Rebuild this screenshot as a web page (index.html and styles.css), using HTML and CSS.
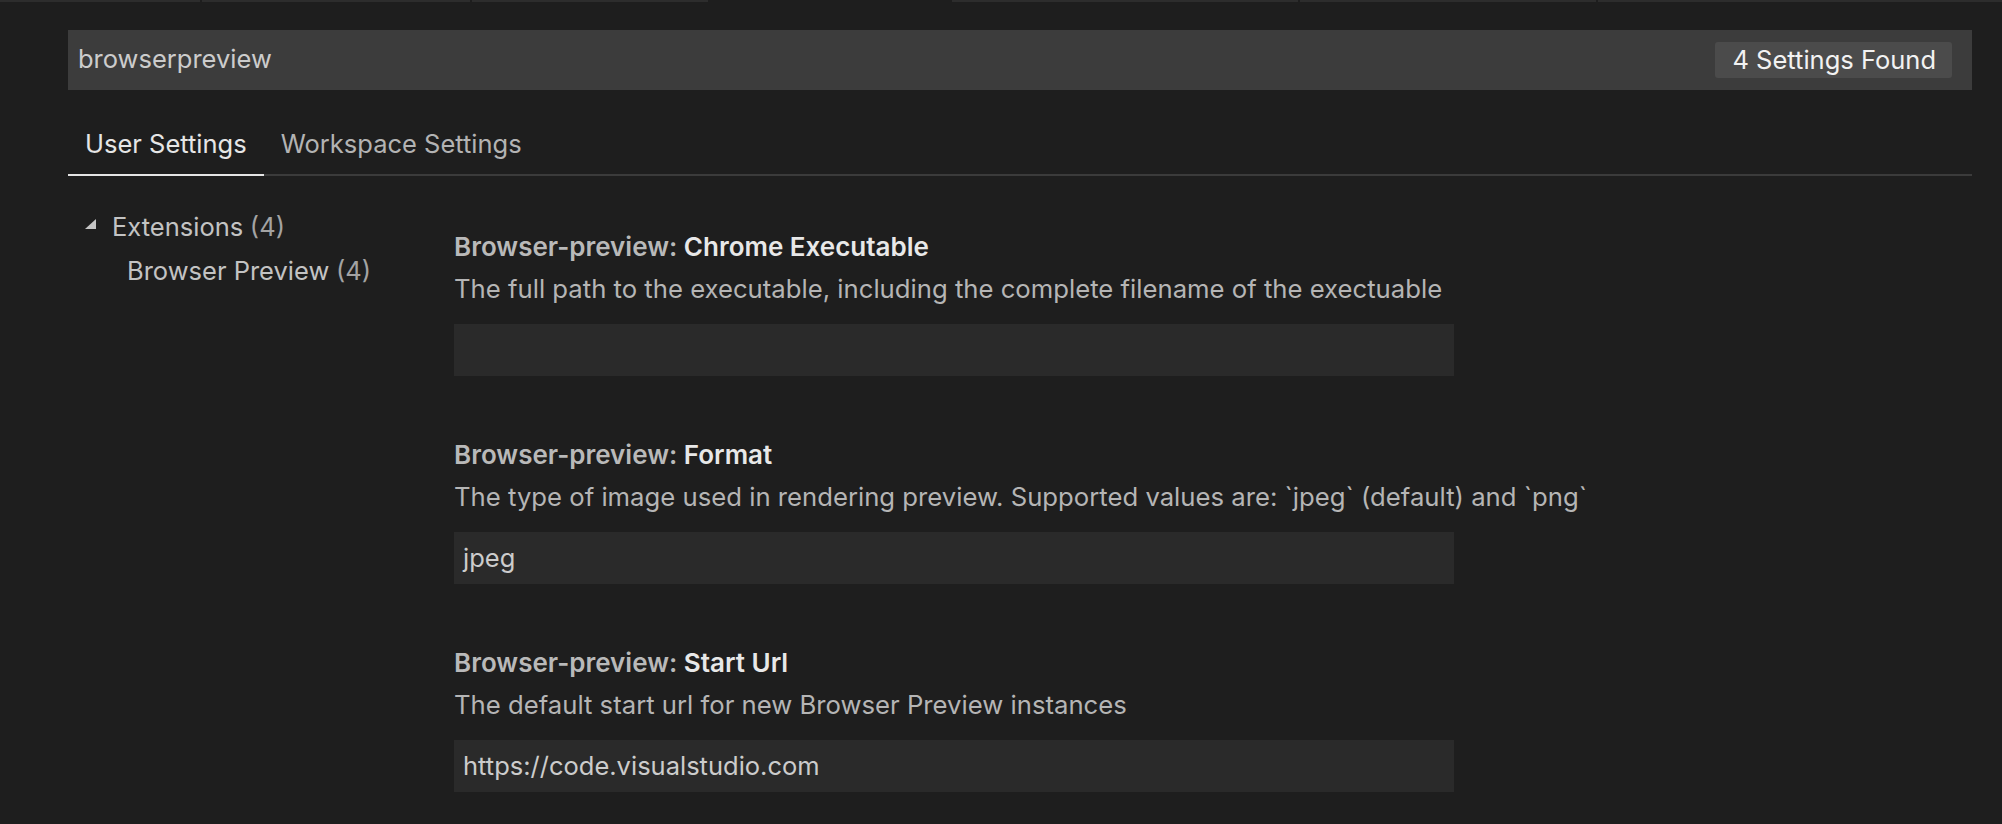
FILE: index.html
```html
<!DOCTYPE html>
<html lang="en">
<head>
<meta charset="utf-8">
<title>Settings</title>
<link rel="stylesheet" href="styles.css">
</head>
<body>
<div class="tabstrip">
  <div class="strip-tab t1"></div>
  <div class="strip-tab t2"></div>
  <div class="strip-tab t3"></div>
  <div class="strip-tab t4 active"></div>
  <div class="strip-tab t5"></div>
  <div class="strip-tab t6"></div>
  <div class="strip-tab t7"></div>
</div>

<div class="editor">
  <div class="search">
    <span class="search-text">browserpreview</span>
    <span class="badge">4 Settings Found</span>
  </div>

  <div class="tabs">
    <div class="tab active">User Settings</div>
    <div class="tab">Workspace Settings</div>
  </div>

  <div class="body">
    <div class="tree">
      <div class="tree-row">
        <svg class="twistie" width="11" height="10" viewBox="0 0 11 10"><polygon points="11,0 11,10 0,10" fill="#c5c5c5"/></svg>
        <span class="label">Extensions</span><span class="count">(4)</span>
      </div>
      <div class="tree-row child">
        <span class="label">Browser Preview</span><span class="count">(4)</span>
      </div>
    </div>

    <div class="settings">
      <div class="setting">
        <div class="title"><span class="cat">Browser-preview: </span><span class="key">Chrome Executable</span></div>
        <div class="desc">The full path to the executable, including the complete filename of the exectuable</div>
        <div class="input"></div>
      </div>
      <div class="setting">
        <div class="title"><span class="cat">Browser-preview: </span><span class="key">Format</span></div>
        <div class="desc">The type of image used in rendering preview. Supported values are: `jpeg` (default) and `png`</div>
        <div class="input">jpeg</div>
      </div>
      <div class="setting">
        <div class="title"><span class="cat">Browser-preview: </span><span class="key">Start Url</span></div>
        <div class="desc">The default start url for new Browser Preview instances</div>
        <div class="input">https://code.visualstudio.com</div>
      </div>
    </div>
  </div>
</div>
</body>
</html>
```
FILE: styles.css
```css
html, body {
  margin: 0;
  padding: 0;
  background: #1e1e1e;
  height: 100%;
  overflow: hidden;
}
body {
  font-family: Inter, "Noto Sans", sans-serif;
  font-size: 25.5px;
  color: #cccccc;
}

.tabstrip {
  display: flex;
  height: 2px;
  gap: 2px;
}
.strip-tab { background: #2d2d2d; height: 2px; }
.strip-tab.t1 { width: 200px; }
.strip-tab.t2 { width: 268px; }
.strip-tab.t3 { width: 236px; }
.strip-tab.t4 { width: 240px; background: #1e1e1e; }
.strip-tab.t5 { width: 346px; }
.strip-tab.t6 { width: 296px; }
.strip-tab.t7 { flex: 1; }

.editor {
  padding: 28px 30px 0 68px;
}

.search {
  height: 60px;
  background: #3c3c3c;
  display: flex;
  align-items: center;
  justify-content: space-between;
  padding: 0 20px 0 10px;
}
.search-text {
  color: #cccccc;
  line-height: 60px;
  position: relative;
  top: -1px;
}
.badge {
  background: #4b4b4b;
  color: #f2f2f2;
  border-radius: 3px;
  height: 36px;
  line-height: 36px;
  padding: 0 16px 0 17px;
  white-space: nowrap;
}

.tabs {
  margin-top: 33px;
  display: flex;
  border-bottom: 2px solid #3b3b3b;
}
.tab {
  line-height: 42px;
  padding: 0 17px 9px;
  margin-bottom: -2px;
  border-bottom: 2px solid transparent;
  color: #b3b3b3;
}
.tab.active {
  color: #e6e6e6;
  border-bottom-color: #e4e4e4;
}

.body {
  display: grid;
  grid-template-columns: 386px 1fr;
}

.tree {
  padding-top: 29px;
}
.tree-row {
  line-height: 44px;
  height: 44px;
  display: flex;
  align-items: center;
  color: #c3c3c3;
}
.tree-row .twistie {
  margin-left: 17px;
  margin-right: 16px;
  position: relative;
  top: -3px;
}
.tree-row.child {
  padding-left: 59px;
}
.count {
  margin-left: 0.26em;
  color: #a3a3a3;
}

.settings {
  padding-top: 50px;
}
.setting {
  margin-bottom: 58px;
}
.title {
  font-size: 26px;
  font-weight: 600;
  line-height: 42px;
  white-space: nowrap;
}
.title .cat { color: #b9b9b9; }
.title .key { color: #e8e8e8; }
.desc {
  font-size: 25.7px;
  line-height: 42px;
  color: #b5b5b5;
  white-space: nowrap;
}
.input {
  margin-top: 14px;
  width: 1000px;
  height: 52px;
  line-height: 52px;
  background: #2a2a2a;
  box-sizing: border-box;
  padding-left: 9px;
  color: #cccccc;
}
```
